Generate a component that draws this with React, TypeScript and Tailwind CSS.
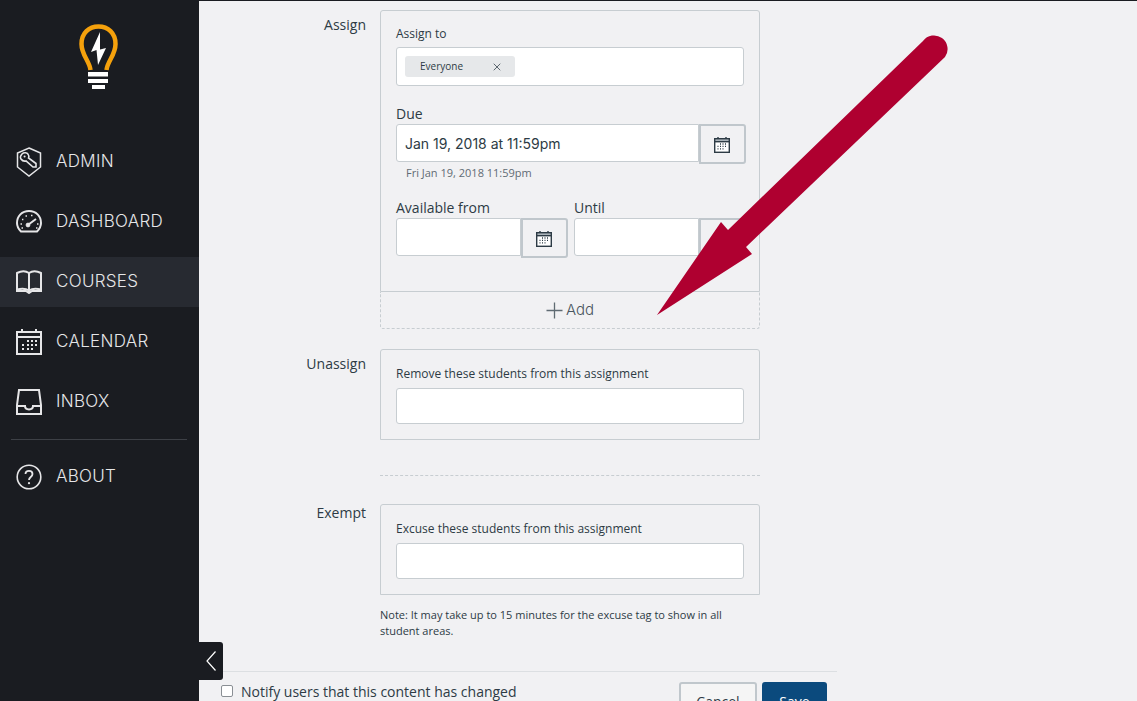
import { ReactNode } from 'react';
import { X } from 'lucide-react';

const navFont = "[font-family:Inter,'Liberation_Sans',sans-serif]";

function Logo() {
  return (
    <svg width="40" height="66" viewBox="0 0 40 66" fill="none">
      <path
        d="M11.5 46 C10.5 37 2.5 31 2.5 20 C2.5 9 10 2.5 19.5 2.5 C29 2.5 36.5 9 36.5 20 C36.5 31 28.5 37 27.5 46"
        stroke="#f5a10c"
        strokeWidth="4.5"
      />
      <path d="M21 8 L12 28 L17.5 26 L19 41 L27 24 L21 25.5 Z" fill="#fff" />
      <rect x="9" y="48" width="20" height="4.5" fill="#fff" />
      <rect x="9" y="55" width="20" height="4" fill="#fff" />
      <rect x="13" y="61" width="13" height="4" fill="#fff" />
    </svg>
  );
}

function AdminIcon() {
  return (
    <svg width="26" height="30" viewBox="0 0 26 30" fill="none" stroke="#e6e6e8" strokeWidth="1.5">
      <path d="M13 1 L24.5 6 V20 L13 29 L1.5 20 V6 Z" />
      <path
        d="M6 7 C8 5 11.5 5.5 12.5 8 C13 9 13 10 12.5 11 L20 16.5 V20 H17 L10 14 C8 14.5 6 13.5 5 12 C4.2 10.5 4.8 8.2 6 7 Z"
        strokeWidth="1.6"
      />
      <circle cx="8.6" cy="9.6" r="1" fill="#e6e6e8" stroke="none" />
    </svg>
  );
}

function DashboardIcon() {
  return (
    <svg width="26" height="23" viewBox="0 0 26 23" fill="none" stroke="#e6e6e8" strokeWidth="2">
      <path d="M5 21.5 C2.5 19 1 16.5 1 13 C1 6 6 1 13 1 C20 1 25 6 25 13 C25 16.5 23.5 19 21 21.5 Z" />
      <circle cx="12" cy="15" r="1.9" fill="#e6e6e8" strokeWidth="1" />
      <path d="M12.5 14.5 L20 9" strokeWidth="2" />
      <path
        d="M4.5 14 H6 M6 9.5 H7.4 M9.5 6 H11 M15 5.5 H16.5 M21 14 H22.5 M20 18 H21.5 M5.5 18 H7"
        strokeWidth="1.4"
      />
    </svg>
  );
}

function CoursesIcon() {
  return (
    <svg width="26" height="24" viewBox="0 0 26 24" fill="none" stroke="#e6e6e8" strokeWidth="2">
      <path d="M1 3 C5 1 10 1 13 3 C16 1 21 1 25 3 V21 H16 L13 23 L10 21 H1 Z" />
      <path d="M13 3 V22" />
      <path d="M1 19.5 C5 18.5 10 18.5 13 20.5 C16 18.5 21 18.5 25 19.5" />
    </svg>
  );
}

function CalendarIcon() {
  return (
    <svg width="26" height="26" viewBox="0 0 26 26" fill="none" stroke="#e6e6e8" strokeWidth="2">
      <rect x="1" y="3" width="24" height="22" />
      <path d="M1 8 H25 M6 0 V4 M20 0 V4" />
      <path
        d="M11 12 h2 M15 12 h2 M19 12 h2 M6 16 h2 M11 16 h2 M15 16 h2 M19 16 h2 M6 20 h2 M11 20 h2 M15 20 h2"
        strokeWidth="1.8"
      />
    </svg>
  );
}

function InboxIcon() {
  return (
    <svg width="26" height="26" viewBox="0 0 26 26" fill="none" stroke="#e6e6e8" strokeWidth="2">
      <path d="M1 25 V16 L3 1 H23 L25 16 V25 Z" />
      <path d="M1 17 H9 C9 21.5 17 21.5 17 17 H25" />
    </svg>
  );
}

function AboutIcon() {
  return (
    <svg width="26" height="26" viewBox="0 0 26 26" fill="none" stroke="#e6e6e8" strokeWidth="1.6">
      <circle cx="13" cy="13" r="11.8" />
      <path d="M9.5 10 C9.5 5.8 16.5 5.8 16.5 10 C16.5 13 13 13 13 16" strokeWidth="1.8" />
      <circle cx="13" cy="19.2" r="1.1" fill="#e6e6e8" stroke="none" />
    </svg>
  );
}

function SmallCalendar() {
  return (
    <svg width="16" height="16" viewBox="0 0 16 16" fill="none" stroke="#2d3b45" strokeWidth="1.4">
      <rect x="0.7" y="1.7" width="14.6" height="13.6" fill="#fff" />
      <rect x="0.7" y="1.7" width="14.6" height="3" fill="#aab3b9" />
      <path d="M4 0 V2 M12 0 V2" />
      <path
        d="M6 7 h1 M8.5 7 h1 M11 7 h1 M3.5 9.3 h1 M6 9.3 h1 M8.5 9.3 h1 M11 9.3 h1 M3.5 11.8 h1 M6 11.8 h1 M8.5 11.8 h1"
        strokeWidth="1.3"
      />
    </svg>
  );
}

function NavItem({ icon, label, active }: { icon: ReactNode; label: string; active?: boolean }) {
  return (
    <div className={`h-[50px] mb-[10px] pb-[1px] flex items-center ${active ? 'bg-[#272a31]' : ''}`}>
      <div className="w-[58px] pl-[16px] shrink-0 flex items-center">{icon}</div>
      <span className={`${navFont} text-[17px] tracking-[0.3px] font-light text-[#e6e6e8] -ml-[2px]`}>{label}</span>
    </div>
  );
}

function DateField({ label }: { label: string }) {
  return (
    <div className="w-[172px]">
      <div className="text-[14px] leading-[20px] text-[#2d3b45]">{label}</div>
      <div className="flex items-start">
        <div className="w-[125px] h-[38px] bg-white border border-[#c7cdd1] rounded-l-[3px]" />
        <div className="w-[47px] h-[40px] bg-[#f1f1f3] border-2 border-[#c0c7cc] rounded-r-[3px] pt-[1px] pr-[1px] flex items-center justify-center">
          <SmallCalendar />
        </div>
      </div>
    </div>
  );
}

function SideBox({ label, text, top }: { label: string; text: string; top: string }) {
  return (
    <div className="flex">
      <div className={`w-[167px] text-right text-[14px] text-[#2d3b45] ${top}`}>{label}</div>
      <div className="ml-[14px] w-[380px] h-[91px] border border-[#c7cdd1] rounded-t-[3px] px-[15px] pt-[15px]">
        <div className="text-[12px] leading-[17px] text-[#2d3b45]">{text}</div>
        <div className="mt-[6px] h-[36px] bg-white border border-[#c7cdd1] rounded-[3px]" />
      </div>
    </div>
  );
}

export default function App() {
  return (
    <div className="relative w-[1137px] h-[701px] overflow-hidden flex bg-[#f1f1f3] font-['Open_Sans',sans-serif]">
      {/* Sidebar */}
      <aside className="w-[199px] shrink-0 bg-[#1a1c21]">
        <div className="h-[137px] pt-[24px] flex justify-center pr-[1px]">
          <Logo />
        </div>
        <NavItem icon={<AdminIcon />} label="ADMIN" />
        <NavItem icon={<DashboardIcon />} label="DASHBOARD" />
        <NavItem icon={<CoursesIcon />} label="COURSES" active />
        <NavItem icon={<CalendarIcon />} label="CALENDAR" />
        <NavItem icon={<InboxIcon />} label="INBOX" />
        <div className="ml-[11px] w-[176px] h-px bg-[#3d4046] mt-[12px]" />
        <div className="mt-[12px]">
          <NavItem icon={<AboutIcon />} label="ABOUT" />
        </div>
      </aside>

      {/* Main */}
      <main className="flex-1 border-t border-[#1a1c21]">
        <div className="flex pt-[9px]">
          <div className="w-[167px] text-right text-[14px] leading-[20px] text-[#2d3b45] pt-[5px]">Assign</div>
          <div className="ml-[14px] w-[380px]">
            <div className="h-[282px] border border-[#c7cdd1] rounded-t-[3px] px-[15px] pt-[14px]">
              <div className="text-[12px] leading-[17px] text-[#2d3b45]">Assign to</div>
              <div className="mt-[5px] w-[348px] h-[39px] bg-white border border-[#c7cdd1] rounded-[3px] pl-[8px] flex items-center">
                <div className="w-[110px] h-[21px] bg-[#e6e8ea] rounded-[3px] flex items-center justify-between pl-[15px] pr-[12px]">
                  <span className="text-[10px] text-[#2d3b45]">Everyone</span>
                  <X size={12} strokeWidth={1.5} className="text-[#2d3b45]" />
                </div>
              </div>
              <div className="mt-[18px] text-[14px] leading-[20px] text-[#2d3b45]">Due</div>
              <div className="flex items-start">
                <div className={`${navFont} w-[303px] shrink-0 h-[38px] bg-white border border-[#c7cdd1] rounded-l-[3px] flex items-center pl-[8px] text-[14px] text-[#2d3b45]`}>
                  Jan 19, 2018 at 11:59pm
                </div>
                <div className="w-[47px] shrink-0 h-[40px] bg-[#f1f1f3] border-2 border-[#c0c7cc] rounded-r-[3px] pt-[1px] pr-[1px] flex items-center justify-center">
                  <SmallCalendar />
                </div>
              </div>
              <div className="mt-[1px] pl-[10px] text-[11px] leading-[15px] text-[#5f6b73]">Fri Jan 19, 2018 11:59pm</div>
              <div className="mt-[18px] flex gap-[6px]">
                <DateField label="Available from" />
                <DateField label="Until" />
              </div>
            </div>
            <div className="h-[37px] border border-dashed border-t-0 border-[#c7cdd1] rounded-b-[3px] flex items-center justify-center text-[#4a5660]">
              <svg width="17" height="17" viewBox="0 0 17 17" stroke="#5f6b73" strokeWidth="1.3" className="mr-[3px]">
                <path d="M8.5 0.5 V16.5 M0.5 8.5 H16.5" />
              </svg>
              <span className={`${navFont} text-[15px] font-light`}>Add</span>
            </div>
          </div>
        </div>

        <div className="mt-[20px]">
          <SideBox label="Unassign" text="Remove these students from this assignment" top="pt-[4px]" />
        </div>

        <div className="ml-[181px] w-[380px] mt-[35px] border-t border-dashed border-[#c7cdd1]" />

        <div className="mt-[28px]">
          <SideBox label="Exempt" text="Excuse these students from this assignment" top="-mt-[2px]" />
        </div>

        <div className="ml-[181px] w-[350px] mt-[12px] text-[11px] leading-[16px] text-[#2d3b45]">
          Note: It may take up to 15 minutes for the excuse tag to show in all student areas.
        </div>

        <div className="mt-[32px] w-[638px] border-t border-[#dcdfe2] flex justify-between pl-[22px] pr-[10px] pt-[10px]">
          <label className="-mt-[1px] flex items-center gap-[8px] h-[20px] text-[14px] text-[#2d3b45]">
            <span className="w-[12px] h-[12px] bg-white border border-[#8a8f94] rounded-[2px]" />
            Notify users that this content has changed
          </label>
          <div className="flex gap-[5px]">
            <div className="w-[78px] h-[38px] bg-[#f5f5f5] border-2 border-[#c0c7cc] rounded-[3px] flex items-center justify-center text-[14px] text-[#2d3b45]">
              Cancel
            </div>
            <div className="w-[65px] h-[38px] bg-[#0b4a7d] rounded-[3px] flex items-center justify-center text-[14px] text-white">
              Save
            </div>
          </div>
        </div>
      </main>

      {/* Collapse toggle */}
      <div className="absolute left-[199px] top-[642px] w-[24px] h-[38px] bg-[#1a1c21] rounded-r-[3px] flex items-center justify-center">
        <svg width="10" height="20" viewBox="0 0 10 20" fill="none" stroke="#fff" strokeWidth="1.2">
          <path d="M9.5 0.5 L1 10 L9.5 19.5" />
        </svg>
      </div>

      {/* Annotation arrow */}
      <svg className="absolute left-0 top-0 pointer-events-none" width="1137" height="701" fill="none">
        <path d="M657 315 L721 222 L728 230 L923 41 A13.6 13.6 0 0 1 945 57 L746 247 L752 254 Z" fill="#af0030" />
      </svg>
    </div>
  );
}
